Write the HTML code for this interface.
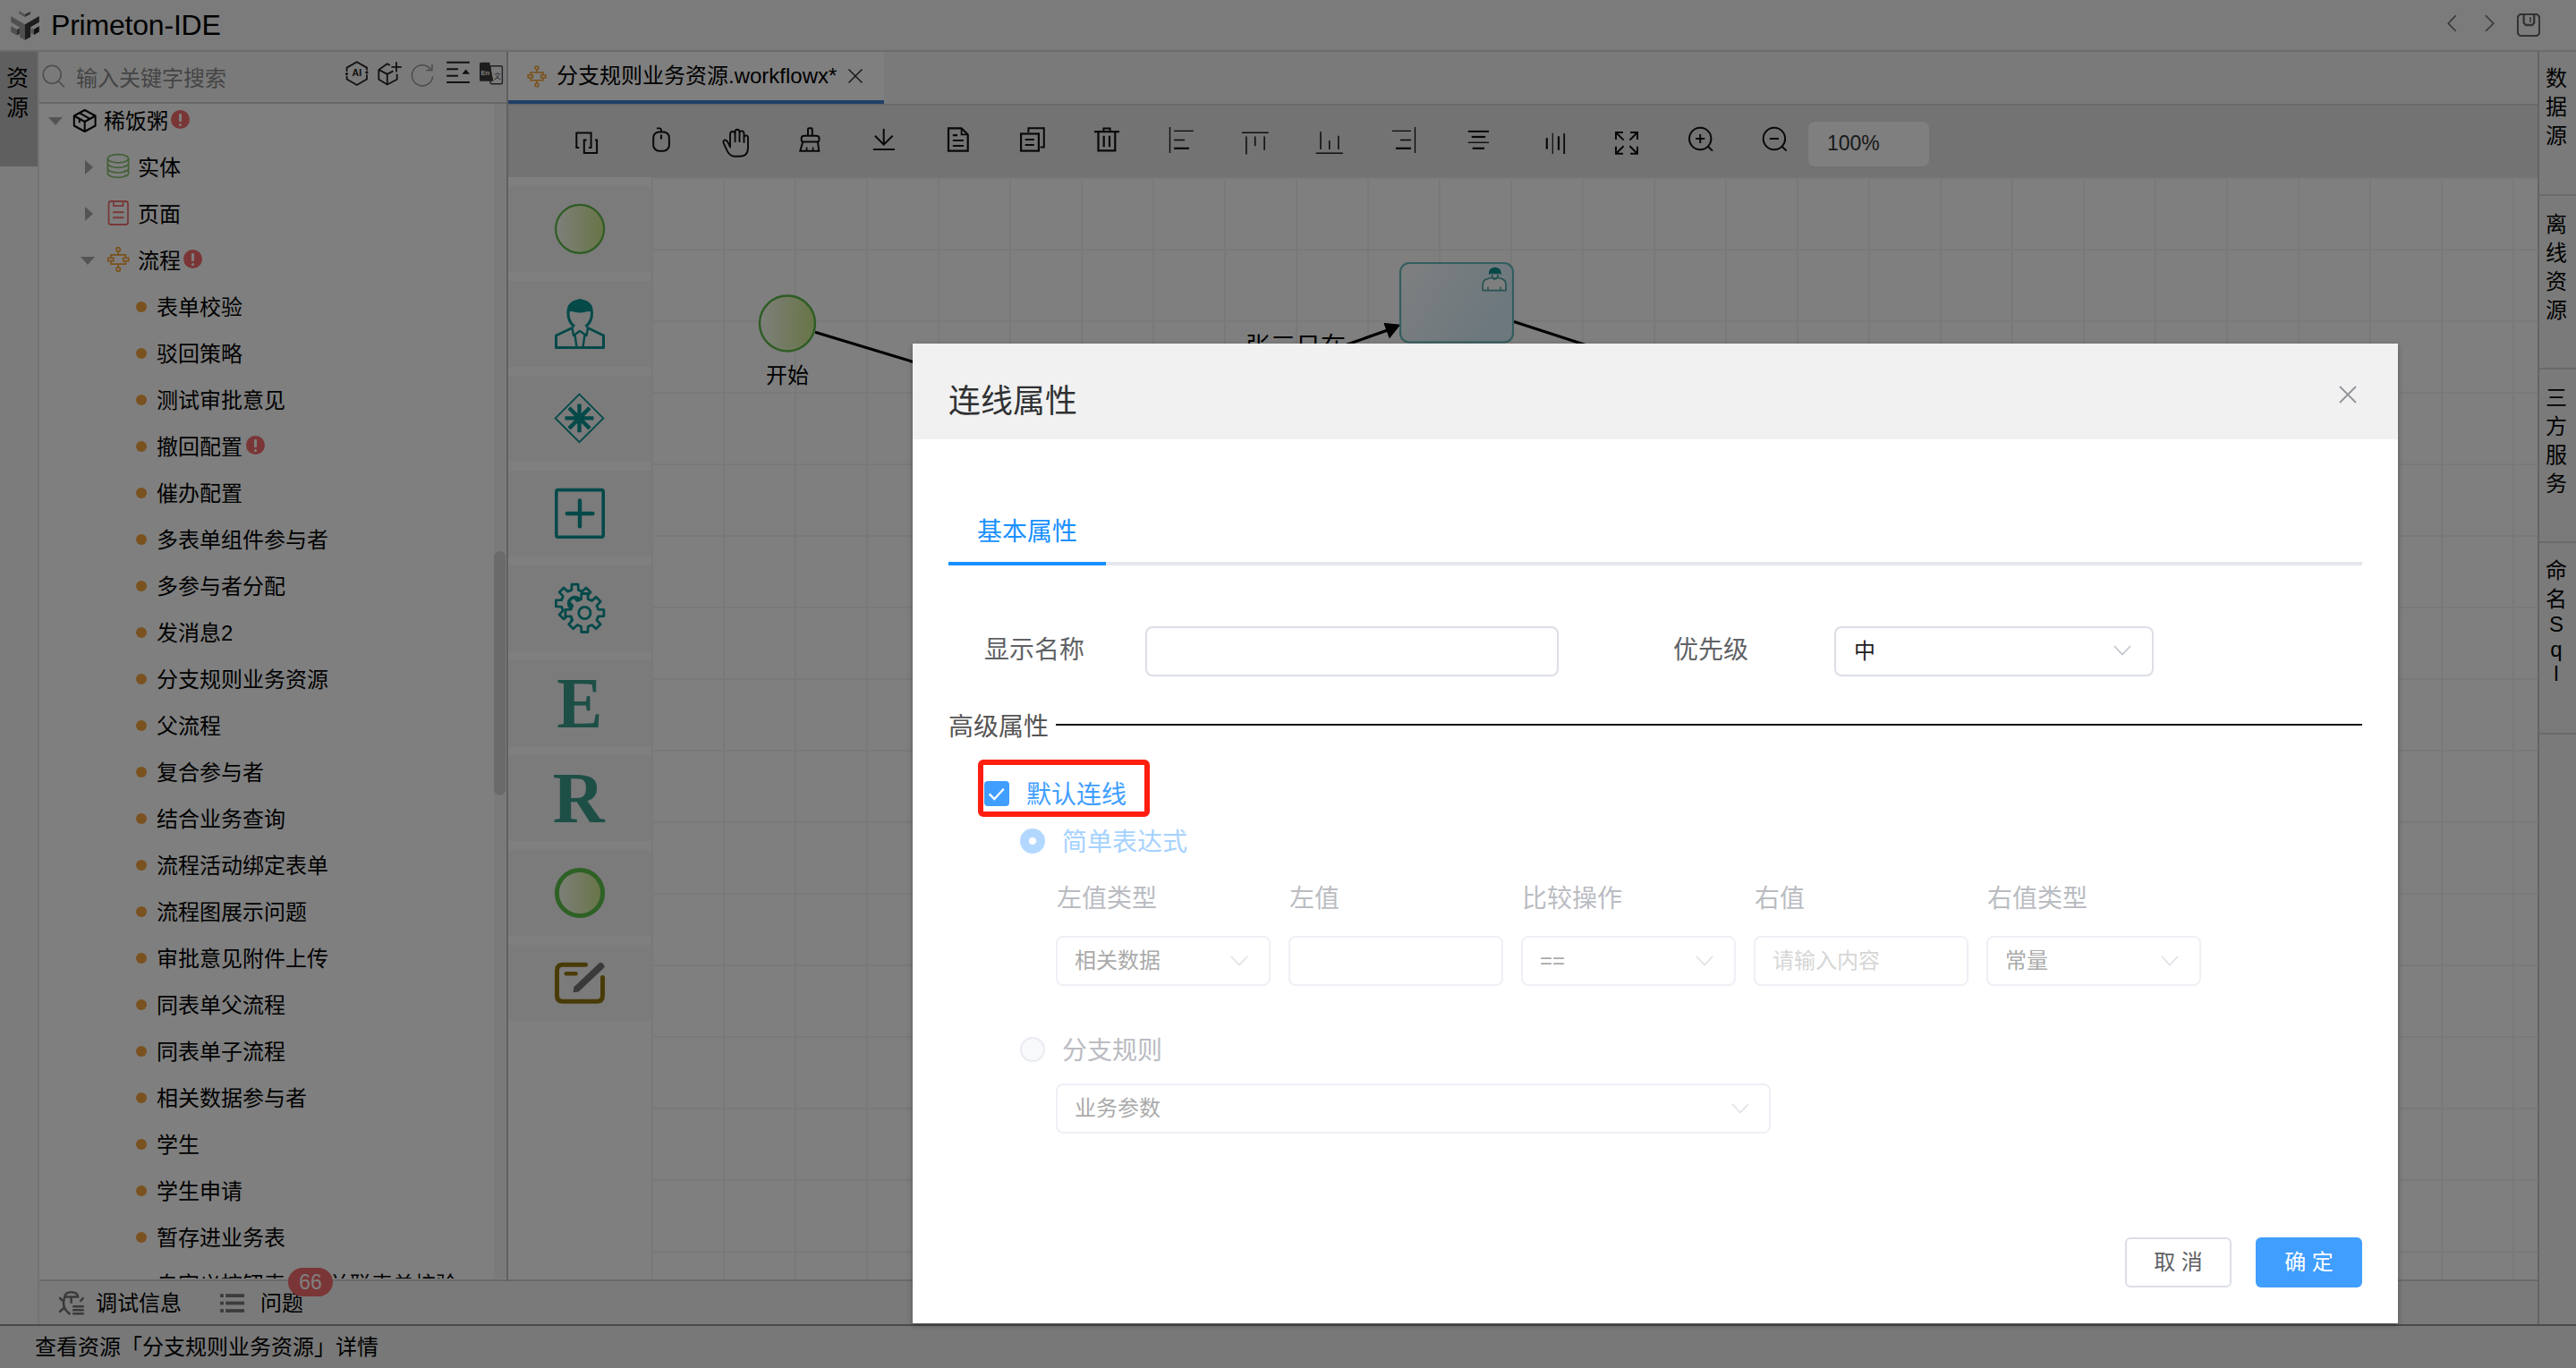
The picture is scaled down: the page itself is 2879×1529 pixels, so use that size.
<!DOCTYPE html><html lang="zh-CN"><head><meta charset="utf-8"><title>Primeton-IDE</title><style>
*{box-sizing:border-box;margin:0;padding:0}
html,body{width:2879px;height:1529px;overflow:hidden;background:#fff}
body{font-family:"Liberation Sans","Noto Sans CJK SC",sans-serif;color:#000;position:relative}
.a{position:absolute}
.t{position:absolute;white-space:nowrap;font-size:24px;line-height:32px;height:32px}
svg{position:absolute;overflow:visible}
#app{position:absolute;left:0;top:0;width:2879px;height:1529px;background:#fff;overflow:hidden}
#mask{position:absolute;left:0;top:0;width:2879px;height:1529px;background:rgba(0,0,0,.5)}
#dlg{position:absolute;left:1020px;top:384px;width:1660px;height:1095px;background:#fff;border-radius:1px;box-shadow:0 2px 6px rgba(0,0,0,.3);overflow:hidden}
.badge{position:absolute;width:21px;height:21px;border-radius:50%;background:#f56c6c}
.badge:before{content:"";position:absolute;left:9px;top:4px;width:3px;height:9px;background:#fff;border-radius:1px}
.badge:after{content:"";position:absolute;left:9px;top:14.5px;width:3px;height:3px;background:#fff;border-radius:50%}
.bul{position:absolute;width:12px;height:12px;border-radius:50%;background:#f4a440}
.inp{position:absolute;height:56px;border:2px solid #dcdfe6;border-radius:8px;background:#fff}
.dis{border-color:#eef0f5}
.lab{position:absolute;white-space:nowrap;font-size:28px;line-height:40px;height:40px;margin-top:2px}
.it{position:absolute;white-space:nowrap;font-size:24px;line-height:36px;height:36px}
</style></head><body>
<div id="app">
<div class="a" style="left:0;top:0;width:2879px;height:56px;background:#f6f6f6"></div>
<div class="a" style="left:0;top:56px;width:2879px;height:2px;background:#d6d6d6"></div>
<div class="t" style="left:57px;top:0;font-size:32px;letter-spacing:-0.2px;line-height:56px;height:56px">Primeton-IDE</div>
<div class="a" style="left:0;top:58px;width:42px;height:1422px;background:#f8f8f8"></div>
<div class="a" style="left:0;top:58px;width:42px;height:128px;background:#bebebe"></div>
<div class="a" style="left:42px;top:58px;width:2px;height:1422px;background:#e6e6e6"></div>
<div class="t" style="left:0;top:71px;width:39px;text-align:center;font-size:25px;line-height:33px;height:33px">资</div>
<div class="t" style="left:0;top:104px;width:39px;text-align:center;font-size:25px;line-height:33px;height:33px">源</div>
<div class="a" style="left:44px;top:58px;width:522px;height:56px;background:#f4f4f4"></div>
<div class="a" style="left:44px;top:114px;width:522px;height:2px;background:#cccccc"></div>
<div class="t" style="left:85px;top:72px;color:#8a8a8a">输入关键字搜索</div>
<div class="a" style="left:44px;top:116px;width:522px;height:1313px;overflow:hidden">
<svg style="left:10px;top:15px" width="16" height="9" viewBox="0 0 16 9"><path d="M0 0H16L8 9Z" fill="#a8a8a8"/></svg>
<div class="t" style="left:72px;top:4px">稀饭粥</div>
<div class="badge" style="left:147px;top:7px"></div>
<div class="t" style="left:110px;top:56px">实体</div>
<div class="t" style="left:110px;top:108px">页面</div>
<div class="t" style="left:110px;top:160px">流程</div>
<div class="badge" style="left:161px;top:163px"></div>
<div class="bul" style="left:108px;top:221px"></div>
<div class="t" style="left:131px;top:212px">表单校验</div>
<div class="bul" style="left:108px;top:273px"></div>
<div class="t" style="left:131px;top:264px">驳回策略</div>
<div class="bul" style="left:108px;top:325px"></div>
<div class="t" style="left:131px;top:316px">测试审批意见</div>
<div class="bul" style="left:108px;top:377px"></div>
<div class="t" style="left:131px;top:368px">撤回配置</div>
<div class="badge" style="left:231px;top:371px"></div>
<div class="bul" style="left:108px;top:429px"></div>
<div class="t" style="left:131px;top:420px">催办配置</div>
<div class="bul" style="left:108px;top:481px"></div>
<div class="t" style="left:131px;top:472px">多表单组件参与者</div>
<div class="bul" style="left:108px;top:533px"></div>
<div class="t" style="left:131px;top:524px">多参与者分配</div>
<div class="bul" style="left:108px;top:585px"></div>
<div class="t" style="left:131px;top:576px">发消息2</div>
<div class="bul" style="left:108px;top:637px"></div>
<div class="t" style="left:131px;top:628px">分支规则业务资源</div>
<div class="bul" style="left:108px;top:689px"></div>
<div class="t" style="left:131px;top:680px">父流程</div>
<div class="bul" style="left:108px;top:741px"></div>
<div class="t" style="left:131px;top:732px">复合参与者</div>
<div class="bul" style="left:108px;top:793px"></div>
<div class="t" style="left:131px;top:784px">结合业务查询</div>
<div class="bul" style="left:108px;top:845px"></div>
<div class="t" style="left:131px;top:836px">流程活动绑定表单</div>
<div class="bul" style="left:108px;top:897px"></div>
<div class="t" style="left:131px;top:888px">流程图展示问题</div>
<div class="bul" style="left:108px;top:949px"></div>
<div class="t" style="left:131px;top:940px">审批意见附件上传</div>
<div class="bul" style="left:108px;top:1001px"></div>
<div class="t" style="left:131px;top:992px">同表单父流程</div>
<div class="bul" style="left:108px;top:1053px"></div>
<div class="t" style="left:131px;top:1044px">同表单子流程</div>
<div class="bul" style="left:108px;top:1105px"></div>
<div class="t" style="left:131px;top:1096px">相关数据参与者</div>
<div class="bul" style="left:108px;top:1157px"></div>
<div class="t" style="left:131px;top:1148px">学生</div>
<div class="bul" style="left:108px;top:1209px"></div>
<div class="t" style="left:131px;top:1200px">学生申请</div>
<div class="bul" style="left:108px;top:1261px"></div>
<div class="t" style="left:131px;top:1252px">暂存进业务表</div>
<div class="bul" style="left:108px;top:1313px"></div>
<div class="t" style="left:131px;top:1304px">自定义按钮表单已关联表单校验</div>
<svg style="left:51px;top:63px" width="9" height="16" viewBox="0 0 9 16"><path d="M0 0V16L9 8Z" fill="#a8a8a8"/></svg>
<svg style="left:51px;top:115px" width="9" height="16" viewBox="0 0 9 16"><path d="M0 0V16L9 8Z" fill="#a8a8a8"/></svg>
<svg style="left:46px;top:171px" width="16" height="9" viewBox="0 0 16 9"><path d="M0 0H16L8 9Z" fill="#a8a8a8"/></svg>
<div class="a" style="left:508px;top:0;width:14px;height:1314px;background:#f4f4f4"></div>
<div class="a" style="left:508px;top:500px;width:13px;height:273px;background:#d4d4d4;border-radius:6.5px"></div>
</div>
<div class="a" style="left:566px;top:58px;width:2px;height:1374px;background:#c0c0c0"></div>
<div class="a" style="left:568px;top:58px;width:2269px;height:58px;background:#f4f4f4"></div>
<div class="a" style="left:568px;top:116px;width:2269px;height:2px;background:#d0d0d0"></div>
<div class="a" style="left:568px;top:58px;width:420px;height:54px;background:#fefefe"></div>
<div class="a" style="left:568px;top:112px;width:420px;height:4px;background:#4080d0"></div>
<div class="t" style="left:622px;top:69px">分支规则业务资源.workflowx*</div>
<div class="a" style="left:568px;top:118px;width:2269px;height:80px;background:#e6e6e6"></div>
<div class="a" style="left:2020px;top:135px;width:137px;height:52px;background:#fefefe;border:1px solid #e2e2ea;border-radius:8px"></div>
<div class="t" style="left:2042px;top:144px;font-size:23px;color:#333">100%</div>
<div class="a" style="left:568px;top:198px;width:160px;height:1232px;background:#fff"></div>
<div class="a" style="left:568px;top:208px;width:160.5px;height:96px;background:#f6f6f6"></div>
<div class="a" style="left:568px;top:314px;width:160.5px;height:96px;background:#f6f6f6"></div>
<div class="a" style="left:568px;top:420px;width:160.5px;height:96px;background:#f6f6f6"></div>
<div class="a" style="left:568px;top:526px;width:160.5px;height:96px;background:#f6f6f6"></div>
<div class="a" style="left:568px;top:632px;width:160.5px;height:96px;background:#f6f6f6"></div>
<div class="a" style="left:568px;top:738px;width:160.5px;height:96px;background:#f6f6f6"></div>
<div class="a" style="left:568px;top:844px;width:160.5px;height:96px;background:#f6f6f6"></div>
<div class="a" style="left:568px;top:950px;width:160.5px;height:96px;background:#f6f6f6"></div>
<div class="a" style="left:568px;top:1056px;width:160.5px;height:85px;background:#f6f6f6"></div>
<div class="a" style="left:728px;top:198px;width:2108px;height:1232px;background-color:#fff;background-image:linear-gradient(to right,#f2f2f2 2px,transparent 2px),linear-gradient(to bottom,#f2f2f2 2px,transparent 2px);background-size:80px 80px;background-position:0px 0px"></div>
<div class="t" style="left:820px;top:404px;width:120px;text-align:center">开始</div>
<div class="t" style="left:1392px;top:370px;font-size:28px;line-height:36px;height:36px">张三日在</div>
<div class="a" style="left:568px;top:1430px;width:2268px;height:2px;background:#d4d4d4"></div>
<div class="a" style="left:2836px;top:58px;width:43px;height:1422px;background:#f4f4f4;border-left:2px solid #c8c8c8"></div>
<div class="a" style="left:2838px;top:217px;width:41px;height:2px;background:#d4d4d4"></div>
<div class="a" style="left:2838px;top:411px;width:41px;height:2px;background:#d4d4d4"></div>
<div class="a" style="left:2838px;top:605px;width:41px;height:2px;background:#d4d4d4"></div>
<div class="a" style="left:2838px;top:819px;width:41px;height:2px;background:#d4d4d4"></div>
<div class="t" style="left:2839px;top:71.5px;width:36px;text-align:center;line-height:32px;height:32px">数</div>
<div class="t" style="left:2839px;top:103.5px;width:36px;text-align:center;line-height:32px;height:32px">据</div>
<div class="t" style="left:2839px;top:135.5px;width:36px;text-align:center;line-height:32px;height:32px">源</div>
<div class="t" style="left:2839px;top:234.5px;width:36px;text-align:center;line-height:32px;height:32px">离</div>
<div class="t" style="left:2839px;top:266.5px;width:36px;text-align:center;line-height:32px;height:32px">线</div>
<div class="t" style="left:2839px;top:298.5px;width:36px;text-align:center;line-height:32px;height:32px">资</div>
<div class="t" style="left:2839px;top:330.5px;width:36px;text-align:center;line-height:32px;height:32px">源</div>
<div class="t" style="left:2839px;top:428.5px;width:36px;text-align:center;line-height:32px;height:32px">三</div>
<div class="t" style="left:2839px;top:460.5px;width:36px;text-align:center;line-height:32px;height:32px">方</div>
<div class="t" style="left:2839px;top:492.5px;width:36px;text-align:center;line-height:32px;height:32px">服</div>
<div class="t" style="left:2839px;top:524.5px;width:36px;text-align:center;line-height:32px;height:32px">务</div>
<div class="t" style="left:2839px;top:621.5px;width:36px;text-align:center;line-height:32px;height:32px">命</div>
<div class="t" style="left:2839px;top:653.5px;width:36px;text-align:center;line-height:32px;height:32px">名</div>
<div class="t" style="left:2839px;top:684px;width:36px;text-align:center;line-height:27.5px;height:27.5px">S</div>
<div class="t" style="left:2839px;top:711.5px;width:36px;text-align:center;line-height:27.5px;height:27.5px">q</div>
<div class="t" style="left:2839px;top:739px;width:36px;text-align:center;line-height:27.5px;height:27.5px">l</div>
<div class="a" style="left:44px;top:1430px;width:522px;height:2px;background:#d4d4d4"></div>
<div class="a" style="left:44px;top:1432px;width:2792px;height:48px;background:#f4f4f4"></div>
<div class="t" style="left:107px;top:1441px">调试信息</div>
<div class="t" style="left:291px;top:1441px">问题</div>
<div class="a" style="left:322px;top:1417px;width:50px;height:32px;border-radius:16px;background:#f56c6c;color:#fff;font-size:23px;line-height:33px;text-align:center">66</div>
<div class="a" style="left:0;top:1480px;width:2879px;height:49px;background:#f0f0f0"></div>
<div class="a" style="left:0;top:1480px;width:2879px;height:2px;background:#949494"></div>
<div class="t" style="left:39px;top:1490px">查看资源「分支规则业务资源」详情</div>
<svg style="left:0;top:0" width="2879" height="1529" viewBox="0 0 2879 1529" fill="none" stroke-linecap="butt" stroke-linejoin="miter">
<g stroke="none">
<path d="M21.2 12.2L27.9 16.1V19L21.2 15.2Z" fill="#a8a8a8"/>
<path d="M27.9 16.1L34 13V15.7L27.9 19Z" fill="#666"/>
<path d="M12.2 18.3L27.9 27.2V44.8L22.1 41.5V30.5L12.2 24.8Z" fill="#a0a0a0"/>
<path d="M27.9 27.2L43.8 18.1V24.7L34.2 30.3V41.3L27.9 44.8Z" fill="#3a3a3a"/>
<path d="M12.2 29L19 32.9V39.6L12.2 35.8Z" fill="#a0a0a0"/>
<path d="M19 32.9L21.9 31.2V38L19 39.6Z" fill="#606060"/>
<path d="M34.7 30.9L38 32.7V38.9L34.7 37.1Z" fill="#aaa"/>
<path d="M38 32.7L43.8 29.2V35.4L38 38.9Z" fill="#222"/>
</g>
<g stroke="#666" stroke-width="1.5">
<path d="M2744.7 17.3L2736.3 26.2L2744.7 34.7"/>
<path d="M2778 17.3L2786.8 26.2L2778 34.7"/>
</g>
<g stroke="#666" stroke-width="2">
<path d="M2816.5 16H2835.5L2838 18.5V37.5L2835.5 40H2816.5L2814 37.5V18.5Z"/>
<path d="M2820.6 16V25.5L2823 28H2830L2832.2 25.5V16" stroke-width="2.3"/>
<path d="M2828 19V25" stroke-width="1.5"/>
</g>
<g stroke="#9c9c9c" stroke-width="1.6"><circle cx="58.2" cy="83.3" r="10"/><path d="M65.4 90.6L71.8 97.4"/></g>
<g stroke="#222" stroke-width="1.8">
<path d="M387.6 80V75.6L398.8 69.2L410 75.6V78.5M410 83.5V88.6L398.8 95L387.6 88.6V85"/>
<circle cx="387.5" cy="82.6" r="1.6" fill="#222" stroke="none"/><circle cx="410" cy="80.9" r="1.6" fill="#222" stroke="none"/>
</g>
<text x="398.8" y="85.4" font-family="Liberation Sans,sans-serif" font-size="10.6" font-weight="bold" fill="#222" text-anchor="middle" stroke="none">AI</text>
<g stroke="#222" stroke-width="1.8">
<path d="M435.8 73L432.8 71.3L423.3 77.9V88.7L432.8 94.5L443.7 88.7V82.8"/>
<path d="M423.3 77.9L432.8 82.9L439.5 79.4M432.8 82.9V94.5"/>
<path d="M437.5 74.8H448.7M443 69.2V80.6"/>
</g>
<g stroke="#969696" stroke-width="1.5">
<path d="M481.5 77.6A11.6 11.6 0 1 0 483.6 85.2"/>
<path d="M482.9 71.8V78.4H476.4"/>
</g>
<g stroke="#222" stroke-width="2">
<path d="M499.2 69.7H524.8M499.2 77.2H512M499.2 84.7H512M499.2 92H524.8"/>
<path d="M516.4 82.8H525L520.7 77.4Z" fill="#222" stroke="none"/>
</g>
<rect x="548" y="73.8" width="13.4" height="20" rx="1.5" stroke="#444" stroke-width="1.4"/>
<text x="556" y="88" font-family="Noto Sans CJK SC,sans-serif" font-size="8" fill="#555" text-anchor="middle" stroke="none">文</text>
<path d="M537.5 69.7H547.2L551.4 90.7H537.5Q536 90.7 536 89.2V71.2Q536 69.7 537.5 69.7Z" fill="#3a3a3a" stroke="none"/>
<text x="542.4" y="83.6" font-family="Liberation Sans,sans-serif" font-size="7.6" font-weight="bold" fill="#ffffff" text-anchor="middle" stroke="none">En</text>
<g stroke="#000" stroke-width="2" stroke-linejoin="round">
<path d="M94.7 123L106.6 129.5V140.5L94.7 147L82.8 140.5V129.5Z"/>
<path d="M82.8 129.5L94.7 136L106.6 129.5M94.7 136V147"/>
<path d="M88.7 126.2L100.6 132.8M88.8 133V137.3"/>
</g>
<g stroke="#88c070" stroke-width="1.7">
<ellipse cx="132" cy="177.2" rx="11.6" ry="4.6"/>
<path d="M120.4 177.2V193.8A11.6 4.6 0 0 0 143.6 193.8V177.2"/>
<path d="M120.4 182.8A11.6 4.6 0 0 0 143.6 182.8M120.4 188.4A11.6 4.6 0 0 0 143.6 188.4"/>
<path d="M139.6 184.4V185.4M139.6 190V191M139.6 195.3V196.3" stroke-width="1.6"/>
</g>
<g stroke="#f07070" stroke-width="1.8">
<rect x="121.5" y="225" width="21.5" height="26" rx="2.5"/>
<path d="M127 225V230.2H137.5V225"/>
<path d="M126.2 237.2H138.4M126.2 243.2H138.4" stroke-width="2"/>
</g>
<g stroke="#f5a335" stroke-width="1.70"><circle cx="132.20" cy="278.90" r="2.20"/><circle cx="132.20" cy="301.10" r="2.20"/><path d="M132.20 281.10V284.90M132.20 295.10V298.90"/><path d="M124.00 287.50V284.90H140.40V287.50"/><path d="M124.00 292.50V295.10H140.40V292.50"/><rect x="120.70" y="288.30" width="6.10" height="3.40"/><rect x="137.60" y="288.30" width="6.10" height="3.40"/></g>
<g stroke="#f5a335" stroke-width="1.56"><circle cx="600.00" cy="75.85" r="1.89"/><circle cx="600.00" cy="94.95" r="1.89"/><path d="M600.00 77.75V81.01M600.00 89.79V93.05"/><path d="M592.95 83.25V81.01H607.05V83.25"/><path d="M592.95 87.55V89.79H607.05V87.55"/><rect x="590.11" y="83.94" width="5.25" height="2.92"/><rect x="604.64" y="83.94" width="5.25" height="2.92"/></g>
<path d="M948.5 77.5L963.5 92.5M963.5 77.5L948.5 92.5" stroke="#222" stroke-width="1.4"/>
<g stroke="#111" stroke-width="2">
<path d="M647.2 165H644.3V148.6H660.6V165H658"/>
<path d="M655.7 156.4H652.8V171H667.1V156.4H665"/>
<rect x="730.2" y="147.4" width="17.7" height="21.3" rx="6.5"/>
<path d="M738.9 147V145.2Q738.9 143.3 736.8 143.3H734" stroke-width="1.8"/><path d="M738.9 150.5V155.6"/>
<path d="M 816.0 165.3 V 150.4 Q 816.0 147.0 818.8 147.0 Q 821.6 147.0 821.6 150.4 V 159.1 M 821.6 151.1 V 148.0 Q 821.6 144.8 824.0 144.8 Q 826.5 144.8 826.5 148.0 V 159.1 M 826.5 149.5 Q 826.5 146.4 829.0 146.4 Q 831.5 146.4 831.5 149.5 V 159.8 M 831.5 153.9 Q 831.5 151.4 833.8 151.4 Q 836.0 151.4 836.0 154.2 V 165.0 Q 836.0 174.7 826.5 174.7 H 821.2 Q 816.0 174.7 813.0 169.1 L 809.0 160.7 Q 807.6 157.3 809.8 156.6 Q 811.9 156.0 813.5 159.1 L 816.0 164.1" stroke-width="1.9" stroke-linejoin="round"/>
<path d="M903 151.5V144.5Q903 143.3 904.2 143.3H906.6Q907.8 143.3 907.8 144.5V151.5"/>
<path d="M897.5 158.6Q895.6 158.6 895.6 155.2Q895.6 151.8 899 151.8H912Q915.6 151.8 915.6 155.2Q915.6 158.6 913.6 158.6Z"/>
<path d="M897.2 158.8L894.3 168.7H915.3L914 158.8"/>
<path d="M901.6 164.6V168.5M908.6 164.6V168.5" stroke-width="1.6"/>
<path d="M987.7 144V160.6M977.9 151.8L987.7 161.6L997.6 151.8M975.9 167H1000"/>
</g>
<g stroke="#111" stroke-width="2.2">
<path d="M1060 143.3H1074.6L1081.7 150.4V168.6H1060Z"/><path d="M1074.6 143.3V150.4H1081.7" stroke-width="1.8"/>
<path d="M1064.9 151.2H1070.1M1064.9 157H1077M1064.9 163H1077"/>
<rect x="1141.1" y="149.5" width="19.8" height="19.1"/>
<path d="M1149.4 148V143.3H1166.8V164.6H1162.6" stroke-width="2"/>
<path d="M1145.7 156H1155.8M1145.7 162H1155.8"/>
<path d="M1223 147.2H1251"/><path d="M1233.4 147V143.4H1240.6V147" stroke-width="2"/>
<path d="M1227.5 147.2V168.3H1246.3V147.2"/>
<path d="M1233.7 151.8V164.3M1240 151.8V164.3"/>
</g>
<g stroke="#111">
<path d="M1307.5 142V171" stroke-width="1.3"/><path d="M1312.1 146.4H1333.9M1312.1 156.5H1324" stroke-width="1.3"/><path d="M1312.1 165.8H1328.9" stroke-width="2.2"/>
<path d="M1387.9 148.3H1417.7" stroke-width="1.4"/><path d="M1392.9 152.6V172.5M1402.7 152.6V163.2M1413.1 152.6V167.8" stroke-width="1.5"/>
<path d="M1470.7 171.2H1500.9" stroke-width="1.4"/><path d="M1476 147.2V167M1485.8 157V167M1495.9 151.8V167" stroke-width="1.5"/>
<path d="M1581.5 142V171" stroke-width="1.3"/><path d="M1556 146.4H1577M1565 156.5H1577" stroke-width="1.3"/><path d="M1559.9 165.8H1577" stroke-width="2.2"/>
<path d="M1640.8 146.9H1664" stroke-width="2"/><path d="M1644.7 153H1660.2" stroke-width="2.2"/><path d="M1640.8 159.3H1664" stroke-width="1.3"/><path d="M1645.7 165.8H1659" stroke-width="2.2"/>
<path d="M1728.8 154.2V166.6" stroke-width="2.2"/><path d="M1735.3 148.7V172" stroke-width="1.2"/><path d="M1742 152.3V167.8" stroke-width="2.2"/><path d="M1748.2 149.2V172" stroke-width="1.8"/>
</g>
<g stroke="#111" stroke-width="2">
<path d="M1814.0 148.0H1806.0V156.0M1806.0 148.0L1814.6 156.6"/>
<path d="M1822.0 148.0H1830.0V156.0M1830.0 148.0L1821.4 156.6"/>
<path d="M1814.0 171.8H1806.0V163.8M1806.0 171.8L1814.6 163.2"/>
<path d="M1822.0 171.8H1830.0V163.8M1830.0 171.8L1821.4 163.2"/>
<circle cx="1900.2" cy="155" r="12.2"/><path d="M1908.9 163.7L1914.0 168.6"/>
<path d="M1895.1 155H1905.3"/>
<path d="M1900.2 150V160"/>
<circle cx="1982.9" cy="155" r="12.2"/><path d="M1991.6 163.7L1996.7 168.6"/>
<path d="M1977.8 155H1988.0"/>
</g>
<defs><linearGradient id="gG" x1="0" y1="0" x2="1" y2="0"><stop offset="0" stop-color="#fcfff6"/><stop offset="1" stop-color="#cfea8c"/></linearGradient>
<linearGradient id="gB" x1="0" y1="0" x2="1" y2="0.45"><stop offset="0" stop-color="#fdffff"/><stop offset="1" stop-color="#d8f0fc"/></linearGradient></defs>
<circle cx="648.1" cy="255.8" r="27" fill="url(#gG)" stroke="#5cb848" stroke-width="2.2"/>
<circle cx="648" cy="998" r="25.6" fill="url(#gG)" stroke="#5cc24a" stroke-width="5"/>
<g stroke="#0a9292" stroke-width="3.00" stroke-linejoin="round"><path d="M634.0 351.0 C632.0 338.0 642.0 335.5 648.0 334.0 C655.0 335.5 664.5 338.0 662.5 351.0 C660.0 345.0 654.0 350.0 648.0 349.5 C642.0 350.0 636.5 345.0 634.0 351.0Z" fill="#0a9292" stroke="none"/><path d="M635.0 348.0C634.5 356.0 638.0 362.0 642.0 365.0M661.5 348.0C662.0 356.0 658.5 362.0 654.5 365.0"/><path d="M640.5 366.0L621.5 375.0V388.5H674.5V375.0L656.0 366.0"/><path d="M639.5 367.0L641.0 375.0L648.0 370.0L655.5 375.0L657.0 367.0" stroke-width="2.40"/><path d="M642.5 374.0L644.5 388.0M653.5 374.0L651.5 388.0" stroke-width="2.40"/></g>
<path d="M647.5 440.6L674.3 467.4L647.5 494.2L620.7 467.4Z" stroke="#0a9292" stroke-width="1.8"/>
<path d="M631.5 467.4H663.5M647.5 451.6V483.2M636 455.9L659 478.9M659 455.9L636 478.9" stroke="#0a9292" stroke-width="4.4"/>
<rect x="621.8" y="547.6" width="52.4" height="52.6" rx="2" stroke="#0a9292" stroke-width="3.6"/>
<path d="M633.8 574H662.4M648 559.4V588.4" stroke="#0a9292" stroke-width="4.4" stroke-linecap="round"/>
<path d="M657.64 670.66L663.81 670.87L663.81 677.93L657.64 678.14L655.88 682.39L660.09 686.90L655.10 691.89L650.59 687.68L646.34 689.44L646.13 695.61L639.07 695.61L638.86 689.44L634.61 687.68L630.10 691.89L625.11 686.90L629.32 682.39L627.56 678.14L621.39 677.93L621.39 670.87L627.56 670.66L629.32 666.41L625.11 661.90L630.10 656.91L634.61 661.12L638.86 659.36L639.07 653.19L646.13 653.19L646.34 659.36L650.59 661.12L655.10 656.91L660.09 661.90L655.88 666.41Z" stroke="#0a9292" stroke-width="2.8" stroke-linejoin="round"/>
<circle cx="642.6" cy="674.4" r="7" stroke="#0a9292" stroke-width="3.5"/>
<path d="M668.73 681.19L674.90 681.42L674.90 688.58L668.73 688.81L666.94 693.15L671.14 697.67L666.07 702.74L661.55 698.54L657.21 700.33L656.98 706.50L649.82 706.50L649.59 700.33L645.25 698.54L640.73 702.74L635.66 697.67L639.86 693.15L638.07 688.81L631.90 688.58L631.90 681.42L638.07 681.19L639.86 676.85L635.66 672.33L640.73 667.26L645.25 671.46L649.59 669.67L649.82 663.50L656.98 663.50L657.21 669.67L661.55 671.46L666.07 667.26L671.14 672.33L666.94 676.85Z" stroke="#0a9292" stroke-width="2.8" fill="#f6f6f6" stroke-linejoin="round"/>
<circle cx="653.4" cy="685" r="6.6" stroke="#0a9292" stroke-width="2.8"/>
<text x="647.8" y="812.6" font-family="Liberation Serif,serif" font-weight="bold" font-size="80" fill="#3a9e8c" text-anchor="middle" stroke="none" textLength="51" lengthAdjust="spacingAndGlyphs">E</text>
<text x="646.6" y="918.6" font-family="Liberation Serif,serif" font-weight="bold" font-size="80" fill="#3a9e8c" text-anchor="middle" stroke="none">R</text>
<path d="M654.5 1078.3H629Q622.5 1078.3 622.5 1084.8V1112.8Q622.5 1119.3 629 1119.3H667Q673.5 1119.3 673.5 1112.8V1092.5" stroke="#93760e" stroke-width="5" stroke-linecap="round"/>
<path d="M632.8 1088.2H643.6" stroke="#93760e" stroke-width="4.4" stroke-linecap="round"/>
<path d="M640.6 1109.2L641.4 1103.2L669.5 1076.6Q671.6 1074.8 673.8 1077L674.6 1077.9Q676.6 1080.2 674.5 1082.2L646.6 1108.4Z" fill="#747474" stroke="none"/>
<path d="M911 371.3L1110 431.5" stroke="#000" stroke-width="3.1"/>
<circle cx="880" cy="361.5" r="31" fill="url(#gG)" stroke="#5cb848" stroke-width="2.4"/>
<path d="M1420 415L1553 368.3" stroke="#000" stroke-width="3.1"/>
<path d="M1564.5 363.2L1547 361.4L1553 377.6Z" fill="#000" stroke="#000" stroke-width="1"/>
<path d="M1692 359.5L1850 411" stroke="#000" stroke-width="3.1"/>
<rect x="1565" y="294" width="126" height="88.5" rx="10" fill="url(#gB)" stroke="#68bcbc" stroke-width="2.2"/>
<path d="M1657.2 324.6V318Q1657.2 312.5 1663.5 311.3L1667.5 310.3Q1670.6 313.4 1673.8 310.3L1677.5 311.3Q1683 312.5 1683 318V324.6Z" fill="#fff" stroke="#4fa5a3" stroke-width="1.7" stroke-linejoin="round"/>
<path d="M1663 320.5V324.5M1677 320.5V324.5" stroke="#4fa5a3" stroke-width="1.5"/>
<path d="M1667.6 305.5V309.6Q1670.8 313 1674 309.6V305.5" stroke="#4fa5a3" stroke-width="1.7"/>
<path d="M1664 307.4Q1663 299 1670.8 298.7Q1678.6 299 1677.6 307.4Q1676 304.8 1674 305.6Q1670.8 306.8 1667.6 305.6Q1665.6 304.8 1664 307.4Z" fill="#0a8f8d" stroke="none"/>
<g stroke="#747474" stroke-width="2.5">
<path d="M72.4 1449.6Q72.8 1444.3 79.6 1444.3Q86.5 1444.3 87.1 1449.6Z"/>
<path d="M79.6 1449.6V1456.8"/>
<path d="M72.4 1449.6Q70 1455.7 71.9 1461.3Q73.8 1466 78.6 1469"/>
<path d="M66.3 1450.2L71.6 1455M66.3 1466.5L71.9 1461.5M93.3 1450.2L89.6 1454.8"/>
<path d="M81.2 1460.2H93.8M81.2 1464.2H93.8M81.2 1468.3H93.8" stroke-width="2.4"/>
</g>
<g fill="#787878" stroke="none">
<rect x="246.1" y="1446.2" width="3.8" height="3.8"/><rect x="252.2" y="1446.2" width="20.9" height="3.8"/>
<rect x="246.1" y="1454.6" width="3.8" height="3.8"/><rect x="252.2" y="1454.6" width="20.9" height="3.8"/>
<rect x="246.1" y="1463.1" width="3.8" height="3.8"/><rect x="252.2" y="1463.1" width="20.9" height="3.8"/>
</g>
</svg>
</div>
<div id="mask"></div>
<div id="dlg">
<div class="a" style="left:0;top:0;width:1660px;height:107px;background:#f1f1f1"></div>
<div class="t" style="left:40px;top:41px;font-size:36px;line-height:48px;height:48px;color:#303133">连线属性</div>
<svg style="left:1594px;top:47px" width="20" height="20" viewBox="0 0 20 20"><path d="M1 1L19 19M19 1L1 19" stroke="#909399" stroke-width="1.8" fill="none"/></svg>
<div class="lab" style="left:72px;top:189px;color:#1890ff">基本属性</div>
<div class="a" style="left:40px;top:244px;width:1580px;height:4px;background:#e4e7ed"></div>
<div class="a" style="left:40px;top:244px;width:176px;height:4px;background:#1890ff"></div>
<div class="lab" style="left:80px;top:321px;color:#606266">显示名称</div>
<div class="inp" style="left:260px;top:316px;width:462px"></div>
<div class="lab" style="left:850px;top:321px;color:#606266">优先级</div>
<div class="inp" style="left:1030px;top:316px;width:357px"></div>
<div class="it" style="left:1052px;top:326px;color:#222">中</div>
<svg style="left:1342px;top:337px" width="20" height="12" viewBox="0 0 20 12"><path d="M1 1L10 10.5L19 1" stroke="#c0c4cc" stroke-width="1.7" fill="none"/></svg>
<div class="lab" style="left:40px;top:407px;color:#555">高级属性</div>
<div class="a" style="left:160px;top:425px;width:1460px;height:2px;background:#111"></div>
<div class="a" style="left:73px;top:465px;width:192px;height:64px;border:6px solid #ff1e10;border-radius:6px"></div>
<div class="a" style="left:80px;top:489px;width:28px;height:28px;border-radius:4px;background:#409eff"></div>
<svg style="left:80px;top:489px" width="28" height="28" viewBox="0 0 28 28"><path d="M5.7 14.4L11.3 20L21.8 8.7" stroke="#fff" stroke-width="2.3" fill="none"/></svg>
<div class="lab" style="left:127px;top:483px;color:#409eff">默认连线</div>
<div class="a" style="left:120px;top:542px;width:28px;height:28px;border-radius:50%;background:#b3d8ff"></div>
<div class="a" style="left:130px;top:552px;width:8px;height:8px;border-radius:50%;background:#fff"></div>
<div class="lab" style="left:167px;top:536px;color:#a6d2ff">简单表达式</div>
<div class="lab" style="left:161px;top:599px;color:#babcc2">左值类型</div>
<div class="inp dis" style="left:160px;top:662px;width:240px"></div>
<div class="it" style="left:181px;top:672px;color:#aaaaaa">相关数据</div>
<svg style="left:355px;top:684px" width="20" height="12" viewBox="0 0 20 12"><path d="M1 1L10 10.5L19 1" stroke="#dfe1e6" stroke-width="1.7" fill="none"/></svg>
<div class="lab" style="left:421px;top:599px;color:#babcc2">左值</div>
<div class="inp dis" style="left:420px;top:662px;width:240px"></div>
<div class="lab" style="left:681px;top:599px;color:#babcc2">比较操作</div>
<div class="inp dis" style="left:680px;top:662px;width:240px"></div>
<div class="it" style="left:701px;top:672px;color:#aaaaaa">==</div>
<svg style="left:875px;top:684px" width="20" height="12" viewBox="0 0 20 12"><path d="M1 1L10 10.5L19 1" stroke="#dfe1e6" stroke-width="1.7" fill="none"/></svg>
<div class="lab" style="left:941px;top:599px;color:#babcc2">右值</div>
<div class="inp dis" style="left:940px;top:662px;width:240px"></div>
<div class="it" style="left:961px;top:672px;color:#d6d6d6">请输入内容</div>
<div class="lab" style="left:1201px;top:599px;color:#babcc2">右值类型</div>
<div class="inp dis" style="left:1200px;top:662px;width:240px"></div>
<div class="it" style="left:1221px;top:672px;color:#aaaaaa">常量</div>
<svg style="left:1395px;top:684px" width="20" height="12" viewBox="0 0 20 12"><path d="M1 1L10 10.5L19 1" stroke="#dfe1e6" stroke-width="1.7" fill="none"/></svg>
<div class="a" style="left:120px;top:775px;width:28px;height:28px;border-radius:50%;background:#f8f9fb;border:2px solid #e9ebf0"></div>
<div class="lab" style="left:167px;top:769px;color:#babcc2">分支规则</div>
<div class="inp dis" style="left:160px;top:827px;width:799px"></div>
<div class="it" style="left:181px;top:837px;color:#aaaaaa">业务参数</div>
<svg style="left:915px;top:849px" width="20" height="12" viewBox="0 0 20 12"><path d="M1 1L10 10.5L19 1" stroke="#dfe1e6" stroke-width="1.7" fill="none"/></svg>
<div class="a" style="left:1355px;top:999px;width:119px;height:56px;border:2px solid #dcdfe6;border-radius:6px;background:#fff;color:#606266;font-size:24px;line-height:52px;text-align:center;white-space:pre">取 消</div>
<div class="a" style="left:1501px;top:999px;width:119px;height:56px;border-radius:6px;background:#409eff;color:#fff;font-size:24px;line-height:56px;text-align:center;white-space:pre">确 定</div>
</div>
</body></html>
